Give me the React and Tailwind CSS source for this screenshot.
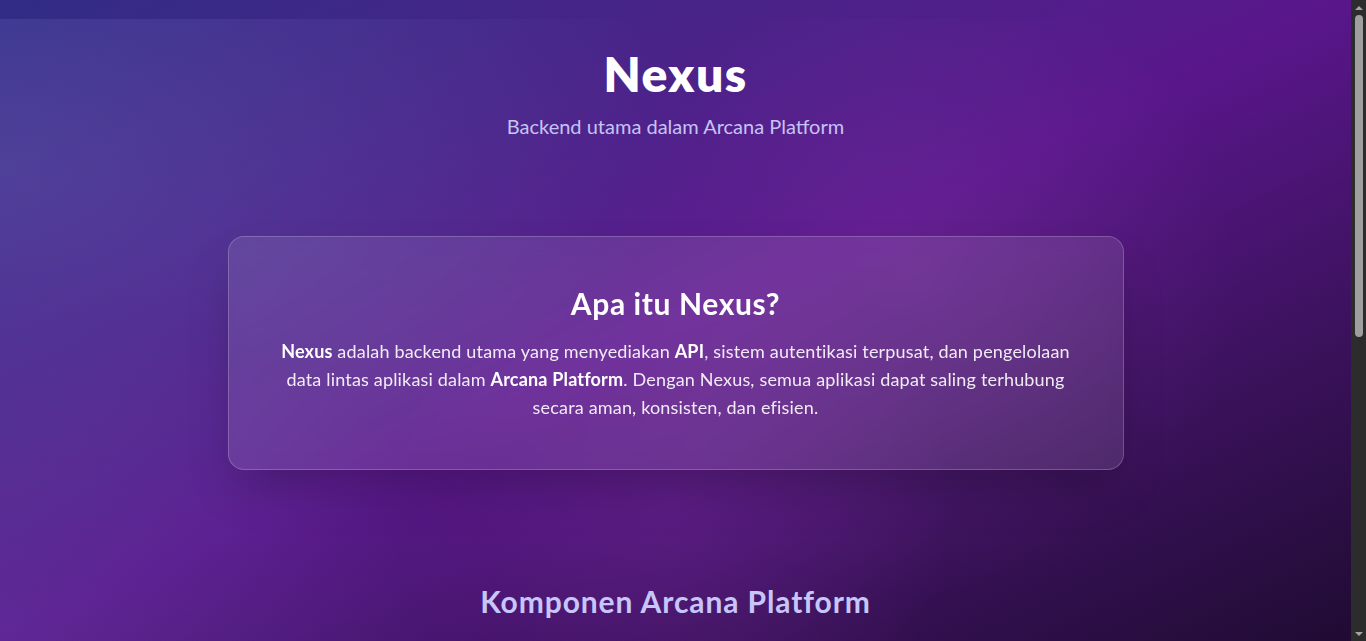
import React from "react";

const komponen = [
  { name: "Nexus", desc: "Backend utama: API, autentikasi terpusat, dan pengelolaan data." },
  { name: "Arcana Portal", desc: "Pintu masuk pengguna untuk mengakses seluruh aplikasi platform." },
  { name: "Arcana Admin", desc: "Dasbor pengelolaan pengguna, peran, dan konfigurasi sistem." },
  { name: "Arcana Mobile", desc: "Aplikasi seluler yang terhubung langsung dengan Nexus." },
];

function Card({ data }) {
  return (
    <div className="rounded-2xl border border-white/20 bg-white/10 p-8 shadow-xl">
      <h3 className="text-xl font-bold text-white mb-2">{data.name}</h3>
      <p className="text-base leading-7 text-white/80">{data.desc}</p>
    </div>
  );
}

function ScrollBar() {
  return (
    <div className="w-[15px] shrink-0 bg-[#2c2c2c] flex flex-col items-center">
      <div className="h-[15px] flex items-center justify-center">
        <div className="w-0 h-0 border-x-[4px] border-x-transparent border-b-[4px] border-b-[#a3a3a3]" />
      </div>
      <div className="w-[8px] h-[322px] rounded-full bg-[#9f9f9f]" />
      <div className="flex-1" />
      <div className="h-[15px] flex items-center justify-center">
        <div className="w-0 h-0 border-x-[4px] border-x-transparent border-t-[4px] border-t-[#a3a3a3]" />
      </div>
    </div>
  );
}

export default function App() {
  return (
    <div className="h-screen flex font-['Lato','Noto_Sans',sans-serif] text-white">
      <div className="flex-1 overflow-y-auto bg-gradient-to-br from-indigo-900 via-purple-900 to-[#200b33]">
        <div className="h-[19px]" />
        <main className="bg-[radial-gradient(ellipse_700px_420px_at_0%_150px,rgba(120,119,198,0.3),transparent),radial-gradient(ellipse_500px_300px_at_0%_600px,rgba(120,119,198,0.18),transparent),radial-gradient(circle_280px_at_50%_480px,rgba(160,60,200,0.22),transparent),radial-gradient(circle_320px_at_68%_260px,rgba(200,110,210,0.12),transparent)]">
          <header className="pt-[31px] pb-8 text-center">
            <h1 className="text-5xl leading-[48px] font-extrabold tracking-[0.03em] text-white mb-[14px]">Nexus</h1>
            <p className="text-xl leading-7 text-[#c6c3f6]">Backend utama dalam Arcana Platform</p>
          </header>

          <section className="px-6 pt-[64px] pb-[113px]">
            <div className="mx-auto max-w-4xl rounded-2xl border border-white/20 bg-white/10 px-12 py-12 text-center shadow-2xl backdrop-blur">
              <h2 className="text-3xl font-bold tracking-[0.02em] text-white mb-4">Apa itu Nexus?</h2>
              <p className="text-lg leading-7 tracking-[0.01em] text-white/90">
                <strong className="text-white">Nexus</strong> adalah backend utama yang menyediakan{" "}
                <strong className="text-white">API</strong>, sistem autentikasi terpusat, dan pengelolaan data
                lintas aplikasi dalam <strong className="text-white">Arcana Platform</strong>. Dengan Nexus, semua
                aplikasi dapat saling terhubung secara aman, konsisten, dan efisien.
              </p>
            </div>
          </section>

          <section className="px-6 pb-16">
            <h2 className="text-3xl font-bold tracking-[0.03em] text-center text-[#c7c6fb] mb-12">
              Komponen Arcana Platform
            </h2>
            <div className="mx-auto grid max-w-4xl grid-cols-2 gap-6">
              {komponen.map((k) => (
                <Card key={k.name} data={k} />
              ))}
            </div>
          </section>

          <footer className="py-8 text-center text-sm text-white/60">
            © 2025 Arcana Platform. Semua hak dilindungi.
          </footer>
        </main>
      </div>
      <ScrollBar />
    </div>
  );
}
